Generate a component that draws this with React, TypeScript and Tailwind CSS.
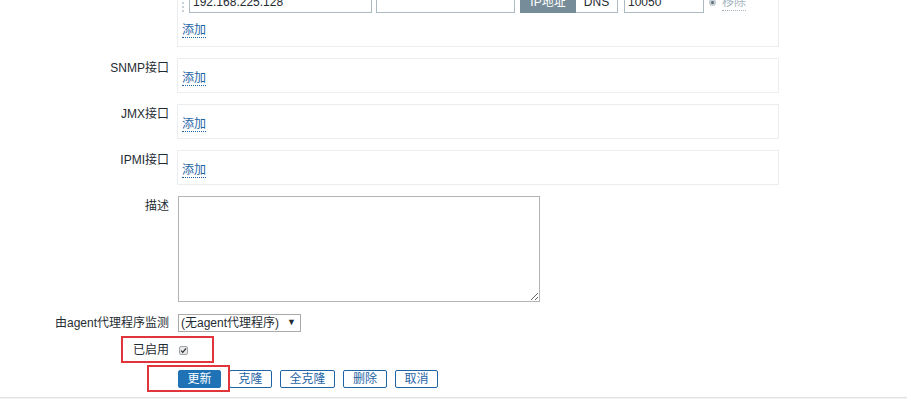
import React from "react";

const font = { fontFamily: '"Liberation Sans", "Noto Sans CJK SC", sans-serif' };

function Label({ children, className = "" }: { children: React.ReactNode; className?: string }) {
  return (
    <div className={`w-[170px] shrink-0 pr-[1px] text-right text-[12px] leading-[16px] text-[#1f2c33] ${className}`}>
      {children}
    </div>
  );
}

function AddLink() {
  return (
    <span className="text-[12px] leading-[16px] text-[#1f65a6] border-b border-dotted border-[#1f65a6]">添加</span>
  );
}

function EmptyBox() {
  return (
    <div className="ml-[7px] w-[602px] h-[35px] border border-[#ebeef0] pt-[11px] pl-[4px] text-[12px] leading-[16px]">
      <AddLink />
    </div>
  );
}

function Btn({ children, primary = false, w }: { children: React.ReactNode; primary?: boolean; w: string }) {
  return (
    <div
      className={`${w} h-[18px] flex items-center justify-center rounded-[2px] border text-[12px] leading-none ${
        primary ? "bg-[#1f72b5] border-[#1f72b5] text-white" : "bg-white border-[#1f65a6] text-[#1f65a6]"
      }`}
    >
      {children}
    </div>
  );
}

export default function App() {
  return (
    <div className="relative w-[907px] h-[399px] overflow-hidden bg-white" style={font}>
      <div className="flex flex-col">
        {/* Agent interface row (partially scrolled) */}
        <div className="flex mt-[-13px]">
          <Label> </Label>
          <div className="ml-[7px] w-[602px] h-[60px] border border-[#ebeef0] pt-[4px] pl-[4px]">
            <div className="flex items-center h-[21px]">
              <div className="w-[3px] h-[19px] border-l-2 border-dotted border-[#c9d2d8] mr-[4px]" />
              <div className="w-[183px] h-[21px] border border-[#acbbc2] px-[3px] text-[12px] leading-[19px] text-[#1f2c33]">
                192.168.225.128
              </div>
              <div className="ml-[4px] w-[139px] h-[21px] border border-[#acbbc2]" />
              <div className="ml-[5px] flex h-[21px]">
                <div className="w-[56px] h-full bg-[#768d99] text-white text-[12px] leading-[21px] text-center">IP地址</div>
                <div className="w-[42px] h-full border border-l-0 border-[#acbbc2] text-[#1f2c33] text-[12px] leading-[19px] text-center">DNS</div>
              </div>
              <div className="ml-[6px] w-[80px] h-[21px] border border-[#acbbc2] px-[3px] text-[12px] leading-[19px] text-[#1f2c33]">
                10050
              </div>
              <div className="ml-[5px] w-[7px] h-[7px] rounded-full bg-[#c5ced4] flex items-center justify-center">
                <div className="w-[3px] h-[3px] rounded-full bg-[#5f6f78]" />
              </div>
              <span className="ml-[6px] text-[12px] leading-[16px] text-[#a3b3bd] border-b border-dotted border-[#a3b3bd]">移除</span>
            </div>
            <div className="mt-[9px] text-[12px] leading-[16px]">
              <AddLink />
            </div>
          </div>
        </div>

        <div className="flex mt-[11px]">
          <Label className="pt-[2px]">SNMP接口</Label>
          <EmptyBox />
        </div>
        <div className="flex mt-[11px]">
          <Label className="pt-[2px]">JMX接口</Label>
          <EmptyBox />
        </div>
        <div className="flex mt-[11px]">
          <Label className="pt-[2px]">IPMI接口</Label>
          <EmptyBox />
        </div>

        <div className="flex mt-[11px]">
          <Label className="pt-[2px]">描述</Label>
          <textarea
            className="ml-[8px] w-[362px] h-[106px] border border-[#b4b4b4] bg-white outline-none block"
            style={font}
          />
        </div>

        <div className="flex items-center mt-[12px] h-[18px]">
          <Label>由agent代理程序监测</Label>
          <div className="ml-[8px] w-[123px] h-[18px] border border-[#a9a9a9] flex items-center pl-[2px] pr-[4px] text-[12px] text-[#1f2c33]">
            <span className="flex-1 truncate">(无agent代理程序)</span>
            <span className="text-[9px] text-[#1f2c33]">▼</span>
          </div>
        </div>

        <div className="flex items-center mt-[11px] h-[14px]">
          <Label>已启用</Label>
          <div className="ml-[9px] w-[9px] h-[9px] rounded-[2px] border border-[#9aa4aa] bg-[#e8e8e8] flex items-center justify-center">
            <svg width="7" height="7" viewBox="0 0 7 7">
              <path d="M1 3.6 L2.8 5.3 L6 1.4" fill="none" stroke="#333" strokeWidth="1.3" />
            </svg>
          </div>
        </div>

        <div className="flex mt-[13px] h-[18px]">
          <div className="w-[178px] shrink-0" />
          <div className="flex gap-[8px]">
            <Btn primary w="w-[43px]">更新</Btn>
            <Btn w="w-[43px]">克隆</Btn>
            <Btn w="w-[55px]">全克隆</Btn>
            <Btn w="w-[44px]">删除</Btn>
            <Btn w="w-[43px]">取消</Btn>
          </div>
        </div>

        <div className="mt-[9px] border-t border-[#e0e0e0] bg-[#f4f4f4] h-[4px]" />
      </div>

      {/* annotation rectangles */}
      <div className="absolute left-[121px] top-[336px] w-[93px] h-[27px] border-2 border-[#e0353b]" />
      <div className="absolute left-[147px] top-[365px] w-[83px] h-[27px] border-2 border-[#e0353b]" />
    </div>
  );
}
